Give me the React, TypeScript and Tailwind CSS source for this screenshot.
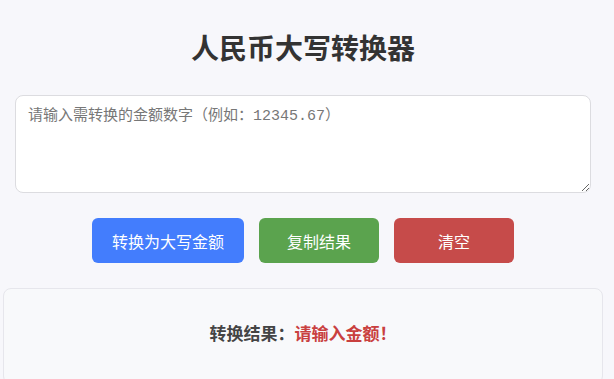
import { useState } from 'react';

const cjk = '"Noto Sans CJK SC", "Noto Sans", sans-serif';

export default function App() {
  const [value, setValue] = useState('');

  return (
    <div
      className="min-h-[379px] w-full bg-[#f7f7fb] pt-[27px]"
      style={{ fontFamily: cjk }}
    >
      <div className="ml-[3px] w-[600px]">
        <h1 className="text-center text-[28px] font-bold leading-[40px] text-[#333]">
          人民币大写转换器
        </h1>

        {/* input */}
        <div className="mt-[28px] px-3">
          <textarea
            value={value}
            onChange={(e) => setValue(e.target.value)}
            placeholder="请输入需转换的金额数字（例如：12345.67）"
            className="block h-[98px] w-full resize-y rounded-lg border border-[#dcdce0] bg-white px-3 py-[10px] text-[15px] leading-[22px] text-[#333] placeholder:text-[#777] focus:outline-none"
            style={{ fontFamily: '"Liberation Mono", "Noto Sans CJK SC", monospace' }}
          />
        </div>

        {/* actions */}
        <div className="mt-[25px] flex justify-center gap-[15px]">
          <button className="h-[45px] w-[152px] rounded-md bg-[#437dfd] text-[16px] text-white">
            转换为大写金额
          </button>
          <button className="h-[45px] w-[120px] rounded-md bg-[#5ba34e] text-[16px] text-white">
            复制结果
          </button>
          <button
            onClick={() => setValue('')}
            className="h-[45px] w-[120px] rounded-md bg-[#c64b4a] text-[16px] text-white"
          >
            清空
          </button>
        </div>

        {/* result */}
        <div className="mt-[25px] flex h-[96px] items-center justify-center rounded-lg border border-[#e6e6ec] bg-[#f8f9fb] pb-[6px] text-[17px] font-bold">
          <span className="text-[#444]">转换结果：</span>
          <span className="text-[#c9403f]">请输入金额！</span>
        </div>
      </div>
    </div>
  );
}
